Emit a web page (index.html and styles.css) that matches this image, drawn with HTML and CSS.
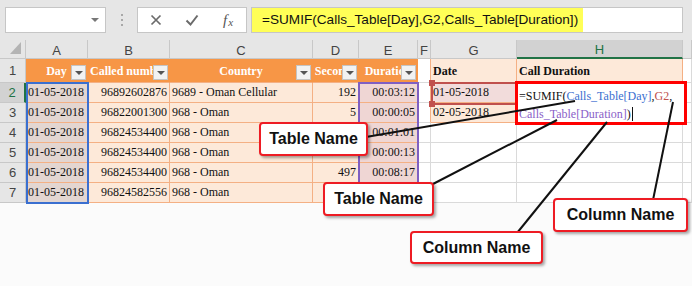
FILE: index.html
```html
<!DOCTYPE html>
<html lang="en">
<head>
  <meta charset="UTF-8">
  <title>SUMIF with structured references</title>
  <link rel="stylesheet" href="styles.css">
</head>
<body>
<div class="app">

  <!-- formula bar -->
  <div class="fbar">
    <div class="namebox"><span class="caret"></span></div>
    <div class="dots"><i></i><i></i><i></i></div>
    <div class="fxbox">
      <span class="fxbtn">
        <svg width="12" height="12" viewBox="0 0 12 12"><path d="M1.5 1.5 L10.5 10.5 M10.5 1.5 L1.5 10.5" stroke="#6b6b6b" stroke-width="1.7" fill="none"/></svg>
      </span>
      <span class="fxbtn">
        <svg width="14" height="12" viewBox="0 0 14 12"><path d="M1.5 6.5 L5.5 10.5 L12.5 1.5" stroke="#6b6b6b" stroke-width="2" fill="none"/></svg>
      </span>
      <span class="fxbtn fx"><i>f</i><i class="sx">x</i></span>
    </div>
    <div class="formula"><span class="hl">=SUMIF(Calls_Table[Day],G2,Calls_Table[Duration])</span></div>
  </div>

  <!-- sheet grid -->
  <div class="sheet">
    <div class="c corner"><svg width="12" height="13" viewBox="0 0 12 13"><polygon points="11,0 11,12 0,12" fill="#b4b4b4"/></svg></div>
    <div class="c ch">A</div>
    <div class="c ch">B</div>
    <div class="c ch">C</div>
    <div class="c ch">D</div>
    <div class="c ch">E</div>
    <div class="c ch">F</div>
    <div class="c ch">G</div>
    <div class="c ch sel">H</div>
    <div class="c ch"></div>

    <div class="c rh">1</div>
    <div class="c th">Day<span class="fb"></span></div>
    <div class="c th">Called number<span class="fb"></span></div>
    <div class="c th">Country<span class="fb"></span></div>
    <div class="c th">Seconds<span class="fb"></span></div>
    <div class="c th">Duration<span class="fb"></span></div>
    <div class="c fo"></div>
    <div class="c gd gh">Date</div>
    <div class="c gd gh">Call Duration</div>
    <div class="c"></div>

    <div class="c rh sel">2</div>
    <div class="c td a">01-05-2018</div>
    <div class="c td r">96892602876</div>
    <div class="c td">9689 - Oman Cellular</div>
    <div class="c td r">192</div>
    <div class="c td e r">00:03:12</div>
    <div class="c fo"></div>
    <div class="c gd g2">01-05-2018</div>
    <div class="c gd"></div>
    <div class="c"></div>

    <div class="c rh">3</div>
    <div class="c td a">01-05-2018</div>
    <div class="c td r">96822001300</div>
    <div class="c td">968 - Oman</div>
    <div class="c td r">5</div>
    <div class="c td e r">00:00:05</div>
    <div class="c fo"></div>
    <div class="c gd">02-05-2018</div>
    <div class="c gd"></div>
    <div class="c"></div>

    <div class="c rh">4</div>
    <div class="c td a">01-05-2018</div>
    <div class="c td r">96824534400</div>
    <div class="c td">968 - Oman</div>
    <div class="c td r"></div>
    <div class="c td e r">00:01:01</div>
    <div class="c"></div>
    <div class="c"></div>
    <div class="c"></div>
    <div class="c"></div>

    <div class="c rh">5</div>
    <div class="c td a">01-05-2018</div>
    <div class="c td r">96824534400</div>
    <div class="c td">968 - Oman</div>
    <div class="c td r">13</div>
    <div class="c td e r">00:00:13</div>
    <div class="c"></div>
    <div class="c"></div>
    <div class="c"></div>
    <div class="c"></div>

    <div class="c rh">6</div>
    <div class="c td a">01-05-2018</div>
    <div class="c td r">96824534400</div>
    <div class="c td">968 - Oman</div>
    <div class="c td r">497</div>
    <div class="c td e r">00:08:17</div>
    <div class="c"></div>
    <div class="c"></div>
    <div class="c"></div>
    <div class="c"></div>

    <div class="c rh">7</div>
    <div class="c td a">01-05-2018</div>
    <div class="c td r">96824582556</div>
    <div class="c td">968 - Oman</div>
    <div class="c td r"></div>
    <div class="c td e r"></div>
    <div class="c"></div>
    <div class="c"></div>
    <div class="c"></div>
    <div class="c"></div>
  </div>

  <!-- range highlights while editing -->
  <div class="rng rng-day"></div>
  <div class="rng rng-dur"></div>
  <div class="rng rng-g2"><i class="hd h1"></i><i class="hd h2"></i></div>

  <!-- in-cell editor -->
  <div class="editor">=SUMIF(<span class="rb">Calls_Table[Day]</span>,<span class="rr">G2</span>,<br><span class="rp">Calls_Table[Duration]</span>)<span class="cursor"></span></div>

  <!-- callout pointers -->
  <svg class="wires" width="692" height="286">
    <line x1="366" y1="137" x2="575" y2="101"/>
    <line x1="431" y1="185" x2="557" y2="120"/>
    <line x1="517" y1="233" x2="607" y2="122"/>
    <line x1="653" y1="200" x2="673" y2="102"/>
  </svg>

  <div class="callout k1">Table Name</div>
  <div class="callout k2">Table Name</div>
  <div class="callout k3">Column Name</div>
  <div class="callout k4">Column Name</div>
</div>
</body>
</html>
```

FILE: styles.css
```css
body {
  margin: 0;
  font-family: "Liberation Sans", Arial, sans-serif;
  background: #fbfbfb;
}

.app {
  position: relative;
  width: 692px;
  height: 286px;
  overflow: hidden;
}

/* formula bar */
.fbar {
  height: 40px;
  box-sizing: border-box;
  padding-top: 7px;
  background: #e6e6e6;
  display: flex;
  align-items: flex-start;
}
.namebox {
  margin-left: 5px;
  width: 101px;
  height: 26px;
  box-sizing: border-box;
  background: #fff;
  border: 1px solid #c6c6c6;
  display: flex;
  align-items: center;
  justify-content: flex-end;
  padding-right: 6px;
}
.caret {
  width: 0;
  height: 0;
  border-left: 4px solid transparent;
  border-right: 4px solid transparent;
  border-top: 4px solid #777;
}
.dots {
  width: 31px;
  height: 26px;
  display: flex;
  flex-direction: column;
  align-items: center;
  justify-content: center;
  gap: 3px;
}
.dots i {
  width: 2px;
  height: 2px;
  background: #a8a8a8;
}
.fxbox {
  width: 110px;
  height: 26px;
  box-sizing: border-box;
  background: #fff;
  border: 1px solid #c6c6c6;
  display: flex;
  align-items: center;
}
.fxbtn {
  flex: 1;
  display: flex;
  justify-content: center;
  align-items: center;
}
.fx {
  font-family: "Liberation Serif", serif;
  font-size: 15px;
  color: #555;
}
.fx .sx {
  font-size: 11px;
  margin-left: 1px;
  position: relative;
  top: 2px;
}
.formula {
  margin-left: 4px;
  width: 432px;
  height: 26px;
  box-sizing: border-box;
  background: #fff;
  border: 1px solid #c6c6c6;
}
.formula .hl {
  display: block;
  width: 331px;
  height: 100%;
  box-sizing: border-box;
  padding-left: 10px;
  background: #ffff57;
  font-size: 13.6px;
  line-height: 24px;
  color: #111;
  white-space: nowrap;
}

/* sheet */
.sheet {
  display: grid;
  grid-template-columns: 26px 62px 82px 143px 46px 59px 13px 86px 166px 9px;
  grid-template-rows: 19px 24px repeat(6, 20px);
  background: #fff;
}
.c {
  box-sizing: border-box;
  border-right: 1px solid #dadada;
  border-bottom: 1px solid #dadada;
  overflow: hidden;
  white-space: nowrap;
  display: flex;
  align-items: center;
  padding: 0 2px;
  font-family: "Liberation Serif", serif;
  font-size: 12px;
  color: #111;
}
.corner {
  background: #e6e6e6;
  border-color: #c8c8c8;
  justify-content: flex-end;
  align-items: flex-end;
  padding: 0 3px 3px 0;
}
.ch, .rh {
  background: #e6e6e6;
  border-color: #c8c8c8;
  justify-content: center;
  font-family: "Liberation Sans", Arial, sans-serif;
  font-size: 13px;
  color: #444;
}
.ch {
  padding-top: 2px;
}
.ch.sel {
  background: #d2d2d2;
  color: #217346;
  border-bottom: 2px solid #217346;
}
.rh.sel {
  background: #d2d2d2;
  color: #217346;
  border-right: 2px solid #217346;
}

/* table header row */
.th {
  position: relative;
  background: #f79646;
  border-right-color: #f79646;
  border-bottom-color: #f4b084;
  color: #fff;
  font-weight: bold;
  justify-content: center;
  align-items: flex-end;
  padding-bottom: 3px;
}
.fb {
  position: absolute;
  right: 1px;
  bottom: 2px;
  width: 15px;
  height: 15px;
  box-sizing: border-box;
  background: #f2f2f2;
  border: 1px solid #c4c4c4;
  display: flex;
  align-items: center;
  justify-content: center;
}
.fb::after {
  content: "";
  border-left: 4px solid transparent;
  border-right: 4px solid transparent;
  border-top: 4px solid #555;
}

/* table body */
.td {
  background: #fde9d9;
  border-right-color: #f4b084;
  border-bottom-color: #f4b084;
}
.td.a {
  background: #e3d6d1;
}
.td.e {
  background: #efd6d4;
}
.r {
  justify-content: flex-end;
}
.fo {
  border-right-color: #f4b084;
}
.gd {
  background: #fde9d9;
  border-right-color: #f4b084;
  border-bottom-color: #f4b084;
}
.gh {
  font-weight: bold;
  align-items: flex-end;
  padding-bottom: 3px;
}
.g2 {
  background: #f2dcdb;
}

/* range highlights */
.rng {
  position: absolute;
  box-sizing: border-box;
  border: 2px solid;
}
.rng-day {
  left: 26px;
  top: 82px;
  width: 63px;
  height: 122px;
  border-color: #3a6fd0;
}
.rng-dur {
  left: 358px;
  top: 82px;
  width: 61px;
  height: 122px;
  border-color: #7f5fc2;
}
.rng-g2 {
  left: 431px;
  top: 82px;
  width: 87px;
  height: 23px;
  border-color: #c0504d;
}
.hd {
  position: absolute;
  left: -4px;
  width: 6px;
  height: 6px;
  background: #c0504d;
}
.h1 { top: -4px; }
.h2 { bottom: -4px; }

/* cell editor */
.editor {
  position: absolute;
  left: 515px;
  top: 81px;
  width: 172px;
  height: 44px;
  box-sizing: border-box;
  border: 3px solid #ff0000;
  background: #fff;
  padding: 3px 0 0 1px;
  font-family: "Liberation Serif", serif;
  font-size: 12px;
  line-height: 18px;
  color: #111;
  white-space: nowrap;
  overflow: hidden;
}
.rb { color: #3a6fd0; }
.rr { color: #c0504d; }
.rp { color: #8a5fc8; }
.cursor {
  display: inline-block;
  width: 1px;
  height: 14px;
  margin-left: 1px;
  background: #111;
  vertical-align: -3px;
}

/* callouts */
.wires {
  position: absolute;
  left: 0;
  top: 0;
}
.wires line {
  stroke: #111;
  stroke-width: 2;
}
.callout {
  position: absolute;
  box-sizing: border-box;
  background: #fff;
  border: 2px solid #ee1c24;
  border-radius: 4px;
  box-shadow: 2px 2px 3px rgba(0, 0, 0, 0.35);
  display: flex;
  align-items: center;
  justify-content: center;
  font-weight: bold;
  font-size: 16px;
  color: #111;
}
.k1 { left: 259px; top: 122px; width: 109px; height: 34px; }
.k2 { left: 323px; top: 182px; width: 111px; height: 34px; }
.k3 { left: 410px; top: 231px; width: 133px; height: 33px; }
.k4 { left: 553px; top: 198px; width: 135px; height: 34px; }
```
